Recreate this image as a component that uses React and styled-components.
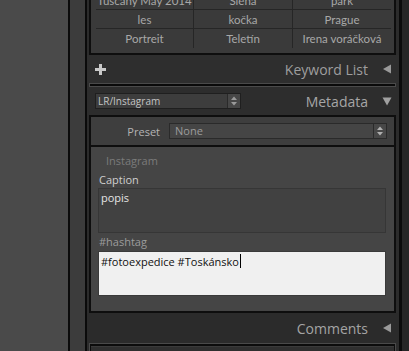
import React from "react";
import styled, { createGlobalStyle } from "styled-components";

const Global = createGlobalStyle`
  html, body { margin: 0; padding: 0; background: #4a4a4a; overflow: hidden; }
  body { font-family: "Open Sans", "DejaVu Sans", sans-serif; }
  * { box-sizing: border-box; }
`;

const Screen = styled.div`
  display: flex;
  width: 409px;
  height: 351px;
  overflow: hidden;
`;

const LeftArea = styled.div`
  width: 68px;
  background: #4a4a4a;
  flex: none;
`;

const VLine = styled.div`
  width: ${(p) => p.$w || 2}px;
  background: #0b0b0b;
  flex: none;
`;

const Strip = styled.div`
  width: 15px;
  background: #3c3c3c;
  flex: none;
`;

const Panel = styled.div`
  width: 312px;
  background: #2c2c2c;
  flex: none;
  display: flex;
  flex-direction: column;
  overflow: hidden;
  & > * {
    flex: none;
  }
`;

const RightStrip = styled.div`
  flex: 1;
  background: #262626;
`;

const GridBox = styled.div`
  margin: -12px 3px 0 2px;
  border: 2px solid #0e0e0e;
  background: #3a3a3a;
  padding: 1px 0 5px;
`;

const GridRow = styled.div`
  display: grid;
  grid-template-columns: 97px 99px 99px;
  margin: 0 3px 0 5px;
  border-bottom: ${(p) => (p.$last ? "none" : "1px solid #262626")};
`;

const GridCell = styled.div`
  height: ${(p) => (p.$last ? 19 : 18)}px;
  line-height: 19px;
  text-align: center;
  font-family: "Lato", "Open Sans", sans-serif;
  font-size: 11.5px;
  color: #a8a8a8;
  border-left: ${(p) => (p.$first ? "none" : "1px solid #262626")};
  white-space: nowrap;
  overflow: hidden;
`;

const Header = styled.div`
  height: ${(p) => p.$h}px;
  display: flex;
  align-items: center;
  padding: 0 7px 0 8px;
  background: ${(p) => p.$bg || "#2d2d2d"};
  gap: 8px;
`;

const HeaderTitle = styled.div`
  margin-left: auto;
  font-size: 14px;
  color: ${(p) => p.$c || "#a2a2a2"};
  line-height: 20px;
  padding-top: 1px;
`;

const Tri = styled.svg`
  width: 10px;
  height: 10px;
  flex: none;
  margin-left: 6px;
`;

const Separator = styled.div`
  height: 4px;
  margin: 0 3px 0 2px;
  background: #0a0a0a;
  border: 1px solid #4a4a4a;
`;

const SmallSelect = styled.div`
  width: 146px;
  height: 16px;
  background: #3d3d3d;
  border: 1px solid #1f1f1f;
  display: flex;
  align-items: center;
  font-size: 10px;
  color: #c4c4c4;
`;

const SelectText = styled.span`
  flex: 1;
  padding-left: ${(p) => p.$pad || 2}px;
  line-height: 14px;
  color: inherit;
  white-space: nowrap;
`;

const Spinner = styled.div`
  width: 13px;
  height: 100%;
  border-left: 1px solid #2a2a2a;
  background: #474747;
  display: flex;
  align-items: center;
  justify-content: center;
`;

const MetaBox = styled.div`
  margin: 0 3px 0 2px;
  border: 2px solid #0e0e0e;
  display: flex;
  flex-direction: column;
`;

const PresetRow = styled.div`
  height: 30px;
  background: #3e3e3e;
  border-bottom: 2px solid #0e0e0e;
  display: flex;
  align-items: center;
`;

const PresetLabel = styled.div`
  width: 69px;
  text-align: right;
  font-size: 11px;
  color: #b4b4b4;
`;

const PresetSelect = styled.div`
  margin-left: 9px;
  width: 218px;
  height: 16px;
  background: #454545;
  border: 1px solid #2a2a2a;
  display: flex;
  align-items: center;
  font-size: 11px;
  color: #9c9c9c;
`;

const Section = styled.div`
  background: #454545;
  padding: 6px 8px 15px 7px;
  display: flex;
  flex-direction: column;
`;

const SectionTitle = styled.div`
  font-size: 11px;
  line-height: 16px;
  color: #7b7b7b;
  padding-left: 8px;
`;

const FieldLabel = styled.div`
  font-size: 11px;
  line-height: 16px;
  color: ${(p) => p.$c};
  padding-left: 1px;
  margin: ${(p) => p.$m};
`;

const Field = styled.div`
  height: 45px;
  border: 1px solid ${(p) => (p.$light ? "#3a3a3a" : "#363636")};
  background: ${(p) => (p.$light ? "#f0f0f0" : "#414141")};
  color: ${(p) => (p.$light ? "#111" : "#e4e4e4")};
  font-size: 11px;
  line-height: 15px;
  padding: ${(p) => (p.$light ? "2px 2px" : "1px 2px")};
  display: flex;
  align-items: flex-start;
`;

const Caret = styled.span`
  display: inline-block;
  width: 1px;
  height: 14px;
  background: #000;
  margin-left: 1px;
  align-self: flex-start;
`;

const NextBox = styled.div`
  margin: 0 3px 0 2px;
  border-top: 1px solid #4a4a4a;
  border-left: 1px solid #4a4a4a;
  border-right: 1px solid #4a4a4a;
  height: 12px;
  background: #0c0c0c;
  padding: 2px 1px 0;
`;

const NextInner = styled.div`
  height: 10px;
  background: #2f2f2f;
  border-top: 1px solid #3a3a3a;
`;

const TriLeft = () => (
  <Tri viewBox="0 0 10 10">
    <polygon points="9,0.5 9,9.5 1,5" fill="#9a9a9a" />
  </Tri>
);

const TriDown = () => (
  <Tri viewBox="0 0 10 10">
    <polygon points="0.5,1.5 9.5,1.5 5,9.5" fill="#a0a0a0" />
  </Tri>
);

const UpDown = ({ c = "#a8a8a8" }) => (
  <svg width="6" height="10" viewBox="0 0 6 10">
    <polygon points="3,0.5 6,4 0,4" fill={c} />
    <polygon points="0,6 6,6 3,9.5" fill={c} />
  </svg>
);

const Plus = () => (
  <svg width="11" height="11" viewBox="0 0 11 11" style={{ flex: "none" }}>
    <rect x="4" y="0" width="3" height="11" fill="#c8c8c8" />
    <rect x="0" y="4" width="11" height="3" fill="#c8c8c8" />
  </svg>
);

const rows = [
  ["Tuscany May 2014", "Siena", "park"],
  ["les", "kočka", "Prague"],
  ["Portreit", "Teletín", "Irena voráčková"],
];

export default function App() {
  return (
    <Screen>
      <Global />
      <LeftArea />
      <VLine />
      <Strip />
      <VLine />
      <Panel>
        <GridBox>
          {rows.map((r, i) => (
            <GridRow key={i} $last={i === rows.length - 1}>
              {r.map((t, j) => (
                <GridCell key={j} $first={j === 0} $last={i === rows.length - 1}>
                  {t}
                </GridCell>
              ))}
            </GridRow>
          ))}
        </GridBox>
        <Header $h={28} $bg="#2e2e2e">
          <Plus />
          <HeaderTitle $c="#9e9e9e">Keyword List</HeaderTitle>
          <TriLeft />
        </Header>
        <Separator />
        <Header $h={28} $bg="#2d2d2d">
          <SmallSelect>
            <SelectText>LR/Instagram</SelectText>
            <Spinner>
              <UpDown c="#9a9a9a" />
            </Spinner>
          </SmallSelect>
          <HeaderTitle $c="#a6a6a6">Metadata</HeaderTitle>
          <TriDown />
        </Header>
        <MetaBox>
          <PresetRow>
            <PresetLabel>Preset</PresetLabel>
            <PresetSelect>
              <SelectText $pad={5}>None</SelectText>
              <Spinner>
                <UpDown c="#b0b0b0" />
              </Spinner>
            </PresetSelect>
          </PresetRow>
          <Section>
            <SectionTitle>Instagram</SectionTitle>
            <FieldLabel $c="#cfcfcf" $m="3px 0 0">Caption</FieldLabel>
            <Field>popis</Field>
            <FieldLabel $c="#9c9c9c" $m="1px 0 1px">#hashtag</FieldLabel>
            <Field $light>
              #fotoexpedice #Toskánsko
              <Caret />
            </Field>
          </Section>
        </MetaBox>
        <Header $h={30} $bg="#2b2b2b">
          <HeaderTitle $c="#a4a4a4">Comments</HeaderTitle>
          <TriLeft />
        </Header>
        <NextBox>
          <NextInner />
        </NextBox>
      </Panel>
      <VLine $w={3} />
      <RightStrip />
    </Screen>
  );
}
